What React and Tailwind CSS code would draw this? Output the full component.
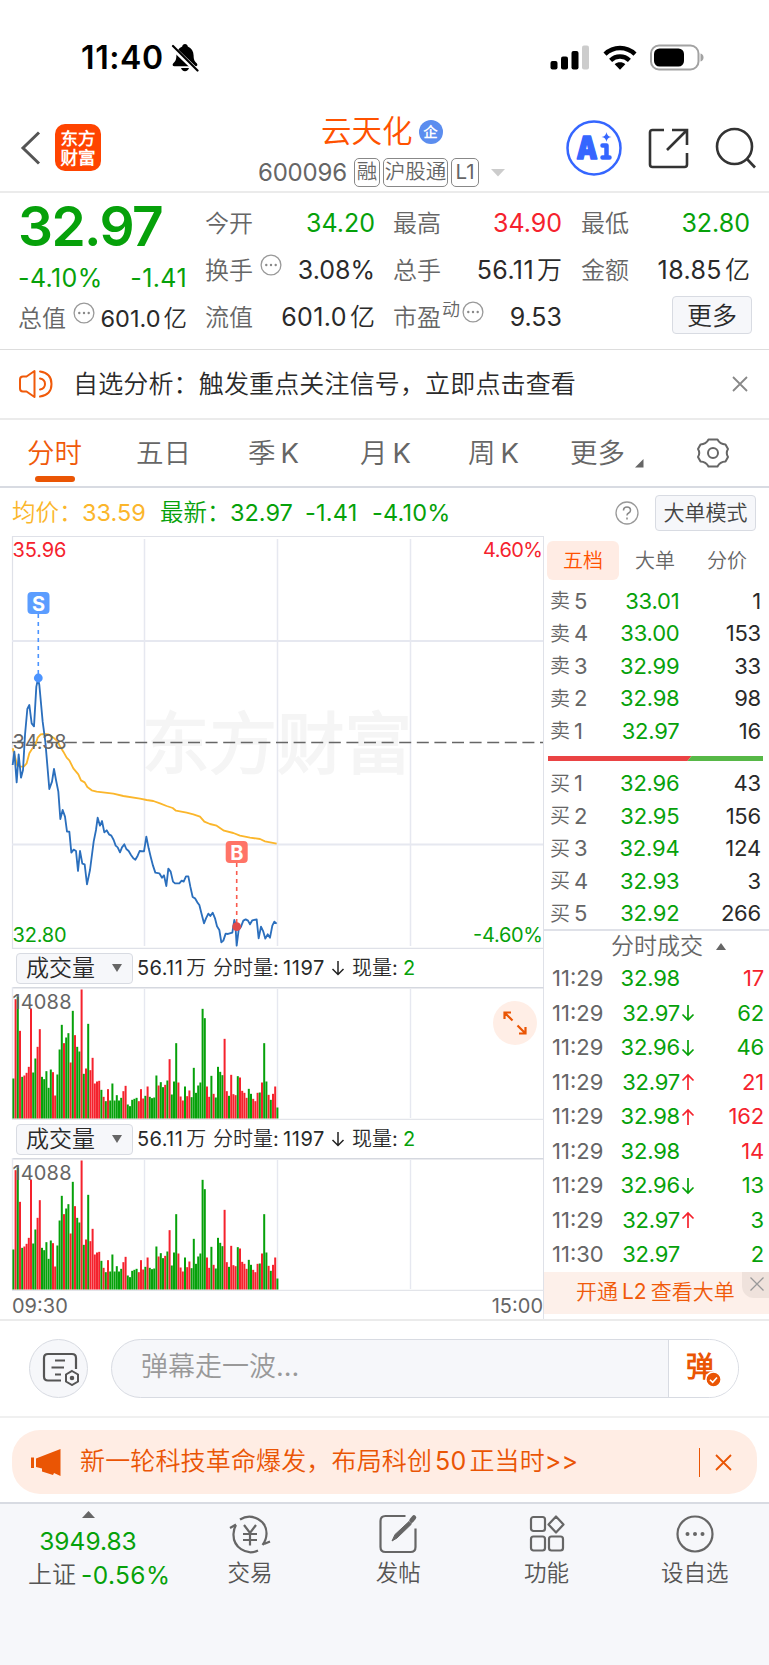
const GREEN = '#06a10a';
const RED = '#f5222d';

const sells = [
    ['卖', 5, '33.01', 1],
    ['卖', 4, '33.00', 153],
    ['卖', 3, '32.99', 33],
    ['卖', 2, '32.98', 98],
    ['卖', 1, '32.97', 16],
];

const buys = [
    ['买', 1, '32.96', 43],
    ['买', 2, '32.95', 156],
    ['买', 3, '32.94', 124],
    ['买', 4, '32.93', 3],
    ['买', 5, '32.92', 266],
];

const trades = [
    { time: '11:29', price: '32.98', dir: '', qty: 17, up: true },
    { time: '11:29', price: '32.97', dir: 'down', qty: 62, up: false },
    { time: '11:29', price: '32.96', dir: 'down', qty: 46, up: false },
    { time: '11:29', price: '32.97', dir: 'up', qty: 21, up: true },
    { time: '11:29', price: '32.98', dir: 'up', qty: 162, up: true },
    { time: '11:29', price: '32.98', dir: '', qty: 14, up: true },
    { time: '11:29', price: '32.96', dir: 'down', qty: 13, up: false },
    { time: '11:29', price: '32.97', dir: 'up', qty: 3, up: false },
    { time: '11:30', price: '32.97', dir: '', qty: 2, up: false },
];

// one value per minute, negative = falling minute (green)
const volumes = [
    -120, 358, -365, 263, -125, 129, 137, 155, 330, -138, -180, 215, 268, -125, -118, -142, -92, -147, 139, 69,
    -132, -207, -281, 226, -243, -256, 168, -323, 250, -215, -201, 387, -134, 150, -284, 145, 182, 105, 111, 113,
    -86, 65, -52, 88, -54, -105, -54, -70, -54, -62, 82, 98, -42, -37, -56, -59, -62, 52, 88, 60,
    -68, 96, -65, -61, -63, -129, 99, -109, -94, 101, -114, 178, -72, -111, -226, 108, 66, 54, -96, 67,
    84, -64, -152, -77, -99, -108, -329, -301, 96, 65, -128, 74, -63, -155, -140, -130, 239, 82, -68, 131,
    73, 70, -127, 123, 83, 77, 62, -89, -74, 59, 52, 77, -78, 108, -226, -111, 71, -56, 74, 96,
    -33,
];

const priceLine =
    '38,690 43,650 50,742 56,658 63,728 69,705 75,600 82,522 88,510 95,565 102,574 109,455 114,432 118,450 128,560 136,620 148,762 156,740 162,702 168,735 175,770 181,852 188,825 195,845 201,890 208,890 214,953 221,944 228,948 234,1008 240,948 247,986 254,988 261,1048 270,1005 281,920 288,885 293,848 300,872 306,858 313,892 320,886 327,898 334,902 341,915 347,932 353,937 360,952 366,937 373,928 379,942 386,948 393,960 400,970 406,974 413,962 419,948 432,949 439,905 446,940 452,965 459,992 466,1013 478,1015 486,1028 492,1021 499,1053 505,1001 512,1010 519,1040 525,1045 538,1045 545,1037 551,1040 558,1024 565,1024 571,1055 578,1086 585,1090 592,1102 598,1110 605,1138 612,1165 618,1150 625,1136 631,1143 638,1133 645,1150 651,1174 658,1185 664,1222 670,1217 677,1196 684,1197 697,1193 703,1155 706,1165 710,1232 716,1185 723,1175 730,1157 737,1153 744,1157 750,1168 757,1156 770,1153 776,1210 783,1175 790,1190 796,1211 803,1198 810,1208 817,1172 823,1160 830,1166';

const avgLine =
    '38,640 45,665 52,692 62,695 72,694 80,685 88,655 96,642 106,630 113,608 122,598 132,597 145,598 160,608 172,618 180,634 190,650 200,668 208,676 220,700 235,718 243,736 254,742 262,756 275,766 290,770 340,776 370,783 420,791 440,795 460,798 480,805 500,813 518,819 528,827 560,833 580,838 600,845 613,860 630,867 650,872 672,887 700,894 720,902 750,908 780,912 795,919 830,926';

const Dots = ({ className }) => (
    <svg width="22" height="22" viewBox="0 0 22 22" className={`shrink-0 ${className}`}>
        <circle cx="11" cy="11" r="9.9" fill="none" stroke="#999" strokeWidth="1.3" />
        <g fill="#888">
            <circle cx="6.3" cy="11" r="1.2" />
            <circle cx="11" cy="11" r="1.2" />
            <circle cx="15.7" cy="11" r="1.2" />
        </g>
    </svg>
);

const StatusBar = () => (
    <div className="flex h-[114px] items-center pl-[81px] pr-[64px] pt-[2px] text-black">
        <span className="text-[32px] font-semibold tracking-[0.6px]">11:40</span>
        <svg width="28" height="30" viewBox="0 0 28 30" className="ml-[7px]">
            <path d="M14 1c-1.600 0-2.600 1-2.800 2.500C7.500 5 5.500 8.200 5.400 12.500c-.1 4.200-.9 5.700-3.100 7.800-1.200 1.200-.8 3 1.200 3h21c2 0 2.400-1.800 1.200-3-2.200-2.100-3-3.600-3.100-7.800-.1-4.300-2.100-7.500-5.800-9C16.600 2 15.600 1 14 1zM10 25c.5 2 2 3.200 4 3.200s3.500-1.200 4-3.200z" />
            <path d="M1 4l25 24" stroke="#fff" strokeWidth="5" />
            <path d="M2 3l24.500 24.500" stroke="#000" strokeWidth="2.200" strokeLinecap="round" />
        </svg>
        <svg width="40" height="26" viewBox="0 0 40 26" className="ml-auto">
            <rect x="0.500" y="16" width="7" height="8.500" rx="2" />
            <rect x="11" y="11.500" width="7" height="13" rx="2" />
            <rect x="21.500" y="6" width="7" height="18.500" rx="2" />
            <rect x="32" y="0.500" width="7" height="24" rx="2" fill="#ccc" />
        </svg>
        <svg width="34" height="26" viewBox="0 0 34 26" className="ml-[13px]">
            <g fill="none" stroke="#000" strokeWidth="4.400">
                <path d="M2 9.200c8.500-8.200 21.500-8.200 30 0" />
                <path d="M7.600 15.300c5.400-5 13.400-5 18.800 0" />
            </g>
            <path d="M17 24.800l-5.300-5.600c3-2.600 7.600-2.600 10.600 0z" />
        </svg>
        <svg width="55" height="28" viewBox="0 0 55 28" className="ml-[13px]">
            <rect x="1" y="1.500" width="47.500" height="24" rx="8" fill="#fff" stroke="#a2a2a2" strokeWidth="2" />
            <rect x="4" y="4.500" width="30" height="18" rx="5.500" />
            <path d="M50.500 9.500c2 .6 3 2 3 4s-1 3.400-3 4z" fill="#a2a2a2" />
        </svg>
    </div>
);

const Tag = ({ children, className }) => (
    <span className={`flex h-[29px] shrink-0 items-center justify-center whitespace-nowrap rounded-[5px] border border-[#888] text-[20.5px] leading-none text-[#666] ${className}`}>
        {children}
    </span>
);

const Header = () => (
    <div className="flex h-[79px] border-b-2 border-[#ebebeb]">
        <svg width="21" height="34" viewBox="0 0 21 34" className="ml-5 mt-[17px]">
            <path d="M19 1.500L3 17l16 15.500" fill="none" stroke="#555" strokeWidth="3" />
        </svg>
        <div className="ml-[14px] mt-[10px] flex h-[47px] w-[46px] flex-col items-center justify-center rounded-[10px] bg-[#ff4400] text-[17.500px] font-bold leading-[19px] text-white">
            <span>东方</span>
            <span>财富</span>
        </div>
        <div className="ml-[157px] w-[250px]">
            <div className="flex h-[35px] items-center pl-[63px]">
                <span className="text-[30.5px] leading-none text-[#ff5200]">云天化</span>
                <span className="ml-[6px] flex size-6 items-center justify-center rounded-full bg-[#5b8def] text-[14px] font-bold leading-none text-white">企</span>
            </div>
            <div className="mt-[9px] flex items-center">
                <span className="w-[96px] shrink-0 text-[24px] leading-none tracking-[-0.200px] text-[#666]">600096</span>
                <Tag className="w-[26px]">融</Tag>
                <Tag className="ml-[3px] w-[65px]">沪股通</Tag>
                <Tag className="ml-[3px] w-[28px]">L1</Tag>
                <svg width="14" height="8" viewBox="0 0 14 8" className="ml-3"><path d="M0 0h14L7 7.500z" fill="#ccc" /></svg>
            </div>
        </div>
        <svg width="56" height="56" viewBox="0 0 56 56" className="ml-[58px] mt-[6px]">
            <circle cx="28" cy="28" r="26.500" fill="none" stroke="#3566ff" strokeWidth="2.500" />
            <text x="10.500" y="38.500" fontSize="31" fontWeight="900" fill="#3566ff" stroke="#3566ff" strokeWidth="1.500" strokeLinejoin="round" textLength="21" lengthAdjust="spacingAndGlyphs">A</text>
            <path d="M36.500 25.500h4v12M36.500 37.500h7" fill="none" stroke="#3566ff" strokeWidth="4.500" strokeLinecap="round" strokeLinejoin="round" />
            <path d="M40.500 12c.7 3.300 1.700 4.300 5 5-3.300.7-4.300 1.700-5 5-.7-3.300-1.700-4.300-5-5 3.300-.7 4.300-1.700 5-5z" fill="#3566ff" />
        </svg>
        <svg width="41" height="41" viewBox="0 0 41 41" className="ml-[26px] mt-[14px]" fill="none" stroke="#333" strokeWidth="2.600">
            <path d="M16 2H4.500Q2 2 2 4.500v32Q2 39 4.500 39h32q2.500 0 2.500-2.500V25" />
            <path d="M24 2h15v15M38.500 2.500L19 22" />
        </svg>
        <svg width="42" height="42" viewBox="0 0 42 42" className="ml-[26px] mt-[13px]" fill="none" stroke="#333" strokeWidth="2.600">
            <circle cx="19.500" cy="19.500" r="17.500" />
            <path d="M32 32l8 8.500" />
        </svg>
    </div>
);

const Cell = ({ label, value, unit, color = 'text-[#2a2a2a]', children }) => (
    <div className="flex h-[47px] items-center">
        <span className="text-[24px] text-[#666]">{label}</span>
        {children}
        <span className={`ml-auto whitespace-nowrap text-[25px] ${color} ${unit ? 'tracking-[0.4px]' : ''}`}>
            {value}
            {unit && <span className="ml-[3px] tracking-normal">{unit}</span>}
        </span>
    </div>
);

const Quote = () => (
    <div className="flex h-[157px] border-b border-[#ddd] pl-[18px] pt-[7px]">
        <div className="w-[169px]">
            <div className="h-[53px] text-[55px] font-semibold leading-[53px] tracking-[-1.6px] text-[#06a10a]">32.97</div>
            <div className="flex h-[48px] items-center justify-between pt-1 text-[25px] tracking-[0.4px] text-[#06a10a]">
                <span>-4.10%</span>
                <span>-1.41</span>
            </div>
            <div className="flex h-[36px] items-center">
                <span className="text-[24px] text-[#666]">总值</span>
                <Dots className="mb-3 ml-[7px]" />
                <span className="ml-auto whitespace-nowrap text-[23.500px] text-[#2a2a2a]">601.0<span className="ml-[3px]">亿</span></span>
            </div>
        </div>
        <div className="ml-[18px] w-[170px]">
            <Cell label="今开" value="34.20" color="text-[#06a10a]" />
            <Cell label="换手" value="3.08%"><Dots className="mb-3 ml-[7px]" /></Cell>
            <Cell label="流值" value="601.0" unit="亿" />
        </div>
        <div className="ml-[18px] w-[169px]">
            <Cell label="最高" value="34.90" color="text-[#f5222d]" />
            <Cell label="总手" value="56.11" unit="万" />
            <Cell label="市盈" value="9.53">
                <span className="mb-4 ml-[1px] text-[18px] text-[#666]">动</span>
                <Dots className="mb-3 ml-[2px]" />
            </Cell>
        </div>
        <div className="ml-[19px] w-[169px]">
            <Cell label="最低" value="32.80" color="text-[#06a10a]" />
            <Cell label="金额" value="18.85" unit="亿" />
            <div className="ml-auto mr-[-2px] mt-[2px] flex h-[38px] w-[80px] items-center justify-center rounded-[4px] border border-[#d8dbe2] bg-[#f6f7fa] pt-[3px] text-[25px] text-[#2a2a2a]">更多</div>
        </div>
    </div>
);

const Notice = () => (
    <div className="flex h-[70px] items-center border-b-2 border-[#ebebeb] pl-[18px]">
        <svg width="36" height="30" viewBox="0 0 36 30" fill="none" stroke="#f05a0a" strokeWidth="2" strokeLinecap="round" strokeLinejoin="round">
            <path d="M16.500 2v26L8.500 22.500H5Q2 22.500 2 19.500v-9Q2 7.500 5 7.500h3.500z" />
            <path d="M22 9.500q5 1 5 5.500t-5 5.500M22 2.500q11.500 1.500 11.500 12.500T22 27.500" />
        </svg>
        <span className="ml-[19px] pt-px text-[25px] tracking-[0.150px] text-[#2a2a2a]">自选分析：触发重点关注信号，立即点击查看</span>
        <svg width="16" height="16" viewBox="0 0 16 16" className="ml-auto mr-[21px]"><path d="M1 1l14 14M15 1L1 15" stroke="#888" strokeWidth="1.800" /></svg>
    </div>
);

const Tabs = () => (
    <div className="flex h-[68px] items-center border-b-2 border-[#d8dbe2] pt-[2px] text-[27.5px] text-[#666]">
        <div className="relative ml-[27px] w-[109px] font-medium text-[#f05a0a]">
            分时
            <i className="absolute -bottom-[7px] left-2 h-[6px] w-10 rounded-full bg-[#ea5504]" />
        </div>
        <span className="w-[112px]">五日</span>
        <span className="w-[112px]">季<span className="ml-[5px]">K</span></span>
        <span className="w-[108px]">月<span className="ml-[5px]">K</span></span>
        <span className="w-[102px]">周<span className="ml-[5px]">K</span></span>
        <span className="w-[65px]">更多</span>
        <svg width="9" height="9" viewBox="0 0 9 9" className="mt-[18px]"><path d="M8.500 0v8.500H0z" fill="#666" /></svg>
        <svg width="34" height="32" viewBox="0 0 34 32" className="mb-[2px] ml-[52px]" fill="none" stroke="#666" strokeWidth="2" strokeLinejoin="round">
            <path d="M12.500 2.500h9q2.500 4.800 8 5l2.500 4.500q-2.500 4 0 8l-2.500 4.500q-5.500.2-8 5h-9q-2.500-4.800-8-5L2 20q2.500-4 0-8l2.500-4.500q5.500-.2 8-5z" />
            <circle cx="17" cy="16" r="5" />
        </svg>
    </div>
);

const InfoRow = () => (
    <div className="flex h-[48px] items-center pl-[12px] pt-[2px] text-[23.5px] text-[#06a10a]">
        <span className="w-[70px] whitespace-nowrap text-[#fbb62b]">均价：</span>
        <span className="w-[78px] text-[#fbb62b]">33.59</span>
        <span className="w-[70px] whitespace-nowrap">最新：</span>
        <span className="w-[75px]">32.97</span>
        <span className="w-[67px] tracking-[0.2px]">-1.41</span>
        <span className="tracking-[0.2px]">-4.10%</span>
        <svg width="24" height="24" viewBox="0 0 24 24" className="ml-auto">
            <circle cx="12" cy="12" r="11" fill="none" stroke="#999" strokeWidth="1.300" />
            <path d="M8.500 9.500q0-3.500 3.500-3.500t3.500 3.300q0 1.700-1.800 2.700T12 14.500M12 16.500v2" fill="none" stroke="#888" strokeWidth="1.500" />
        </svg>
        <div className="ml-4 mr-[13px] flex h-[36px] w-[101px] items-center justify-center rounded-[4px] border border-[#d8dbe2] bg-[#f6f7fa] text-[21px] text-[#444]">大单模式</div>
    </div>
);

const PriceChart = () => (
    <svg width="544" height="413" viewBox="0 536 544 413" className="block">
        <text x="142" y="768" fontSize="67.500" fontWeight="900" fill="#f5f5f5">东方财富</text>
        <g stroke="#e6e8f0" strokeWidth="1.500">
            <path d="M12.500 536.500h531M12.500 536v413M12.500 948.300h531" fill="none" stroke="#dfe1e8" strokeWidth="1.200" />
            <path d="M144.500 539v407M277.500 539v407M410.500 539v407" />
            <path d="M12 641h531M12 844.500h531" strokeWidth="2" />
        </g>
        <path d="M12 742.500h531" stroke="#666" strokeWidth="1.400" strokeDasharray="12 5.600" />
        <g fontSize="20" fill={RED}>
            <text x="12.500" y="556.500" textLength="54">35.96</text>
            <text x="543" y="556.500" textAnchor="end" textLength="60">4.60%</text>
        </g>
        <g transform="translate(0 535) scale(.33333)" fill="none" strokeLinejoin="round">
            <polyline points={avgLine} stroke="#fbb62b" strokeWidth="5.500" />
            <polyline points={priceLine} stroke="#2b6fbd" strokeWidth="5.500" />
        </g>
        <text x="12.500" y="749" fontSize="20" fill="#666" textLength="54">34.38</text>
        <g fontSize="20" fill={GREEN}>
            <text x="12.500" y="942" textLength="54">32.80</text>
            <text x="543" y="942" textAnchor="end" textLength="70">-4.60%</text>
        </g>
        <path d="M38.300 614v62" stroke="#4c94ff" strokeWidth="1.600" strokeDasharray="4 4" />
        <circle cx="38.300" cy="678" r="4.400" fill="#4c94ff" />
        <rect x="27.500" y="592" width="22" height="22" rx="4" fill="#5b9dff" />
        <text x="38.500" y="610.500" fontSize="20" fontWeight="700" fill="#fff" textAnchor="middle">S</text>
        <path d="M236.700 863v60" stroke="#f95b4e" strokeWidth="1.600" strokeDasharray="4 4" />
        <circle cx="236.700" cy="926.700" r="4.400" fill="#e04a4a" />
        <rect x="225.700" y="841" width="22" height="22" rx="4" fill="#ff7467" />
        <text x="236.800" y="859.500" fontSize="20" fontWeight="700" fill="#fff" textAnchor="middle">B</text>
    </svg>
);

const VolumePane = () => (
    <div className="h-[171px]">
        <div className="flex h-[38px] items-center pl-4 text-[20px] text-[#2a2a2a]">
            <div className="flex h-[31px] w-[117px] items-center rounded-[4px] border border-[#d8dbe2] bg-[#f6f7fa] pl-[9px] text-[23px]">
                成交量
                <svg width="10" height="8" viewBox="0 0 10 8" className="ml-[17px]"><path d="M0 0h10L5 8z" fill="#666" /></svg>
            </div>
            <span className="ml-1 w-[76px] whitespace-nowrap tracking-[0.4px]">56.11<span className="ml-[3px]">万</span></span>
            <span className="w-[70px] whitespace-nowrap">分时量:</span>
            <span className="w-[48px] tracking-[0.6px]">1197</span>
            <svg width="14" height="16" viewBox="0 0 14 16" className="mr-[7px]"><path d="M7 1v13M1.500 9L7 14.500 12.500 9" fill="none" stroke="#222" strokeWidth="1.500" /></svg>
            <span className="w-[51px] whitespace-nowrap">现量:</span>
            <span className="text-[#06a10a]">2</span>
        </div>
        <svg width="544" height="133" viewBox="0 0 544 133" className="block">
            <path d="M12 .5h531.500" stroke="#d5d8df" strokeWidth="2" />
            <path d="M12.500 0v132M144.500 2v129M277.500 2v129M410.500 2v129" stroke="#e6e8f0" strokeWidth="1.400" />
            <path d="M12 132.500h531.500" stroke="#e3e5ea" strokeWidth="1.400" />
            {volumes.map((v, i) => (
                <rect key={i} x={12.400 + i * 2.2} y={131.500 - Math.abs(v) / 3} width="2" height={Math.abs(v) / 3} fill={v > 0 ? RED : GREEN} />
            ))}
            <text x="12.500" y="21.500" fontSize="20" fill="#666" textLength="59">14088</text>
        </svg>
    </div>
);

const BookRow = ({ row }) => (
    <div className="flex h-[32.500px] items-center text-[22px]">
        <span className="w-[24px] text-[20px] text-[#666]">{row[0]}</span>
        <span className="text-[#666]">{row[1]}</span>
        <span className="ml-auto w-[70px] text-right tracking-[-0.200px] text-[#06a10a]">{row[2]}</span>
        <span className="w-[81.5px] text-right tracking-[-0.200px] text-[#2a2a2a]">{row[3]}</span>
    </div>
);

const Arrow = ({ dir }) => (
    <svg width="14" height="18" viewBox="0 0 14 18" className="ml-[1px]" fill="none" strokeWidth="1.700">
        {dir === 'down' && <path d="M7 1v15M1.500 10.500L7 16l5.500-5.500" stroke={GREEN} />}
        {dir === 'up' && <path d="M7 17V2M1.500 7.500L7 2l5.500 5.500" stroke={RED} />}
    </svg>
);

const SidePanel = () => (
    <div className="h-[783px] w-[226px] border-l border-[#dfe1e8]">
        <div className="flex items-center pl-[3px] pt-[5px] text-[20px] text-[#666]">
            <span className="flex h-[39px] w-[72px] items-center justify-center rounded-[6px] bg-[#ffece4] font-medium text-[#ff5200]">五档</span>
            <span className="ml-4 w-[72px]">大单</span>
            <span>分价</span>
        </div>
        <div className="pl-[6px] pr-[8px] pt-[5px]">
            {sells.map((r) => <BookRow key={r[1]} row={r} />)}
        </div>
        <svg width="215" height="5" viewBox="0 0 215 5" className="ml-1 mt-[8px] block">
            <path d="M0 0h143.500l-4 5H0z" fill="#ea4344" />
            <path d="M143.500 0H215v5h-75.500z" fill="#57b847" />
        </svg>
        <div className="h-[170px] border-b-2 border-[#dfe1e8] pl-[6px] pr-[8px] pt-[7px]">
            {buys.map((r) => <BookRow key={r[1]} row={r} />)}
        </div>
        <div className="flex h-[31px] items-center pl-[67px] text-[23px] text-[#666]">
            分时成交
            <svg width="10" height="7" viewBox="0 0 10 7" className="ml-[13px]"><path d="M0 7h10L5 0z" fill="#666" /></svg>
        </div>
        <div className="pl-2 pr-[5px]">
            {trades.map((t, i) => (
                <div key={i} className="flex h-[34.500px] items-center text-[22px]">
                    <span className="text-[#666]">{t.time}</span>
                    <span className="ml-auto tracking-[-0.200px] text-[#06a10a]">{t.price}</span>
                    <Arrow dir={t.dir} />
                    <span className={`w-[69px] text-right tracking-[-0.200px] ${t.up ? 'text-[#f5222d]' : 'text-[#06a10a]'}`}>{t.qty}</span>
                </div>
            ))}
        </div>
        <div className="relative flex h-[42px] items-center bg-[#fdf0ea] pb-[2px] pl-[32px] text-[21px] text-[#f05a0a]">
            开通<span className="mx-1">L2</span>查看大单
            <span className="absolute right-0 top-0 flex h-[26px] w-[27px] items-center justify-center rounded-bl-[12px] bg-[#efe2dc]">
                <svg width="14" height="14" viewBox="0 0 14 14" className="ml-[2px] mb-[2px]"><path d="M.5.5l13 13M13.500.5l-13 13" stroke="#999" strokeWidth="1.300" /></svg>
            </span>
        </div>
    </div>
);

const CommentBar = () => (
    <div className="flex h-[97px] items-center border-b-2 border-[#f0f0f0] pl-[29px]">
        <div className="flex size-[59px] items-center justify-center rounded-full border border-[#d8dbe2] bg-[#f6f7fa]">
            <svg width="38" height="34" viewBox="0 0 38 34" className="ml-[2px]" fill="none" stroke="#555" strokeWidth="2.200">
                <path d="M20 28.500H7q-4 0-4-4V6q0-4 4-4h24q4 0 4 4v11" />
                <path d="M14 8.500h10M10.500 15.500H23M14 22.500h6" />
                <path d="M31 19l6 3.500v7L31 33l-6-3.500v-7z" strokeWidth="2" />
                <circle cx="31" cy="26" r="1.200" fill="#555" />
            </svg>
        </div>
        <div className="ml-[23px] flex h-[59px] w-[628px] items-center overflow-hidden rounded-full border border-[#d8dbe2] bg-[#f6f7fa]">
            <span className="pb-[3px] pl-[29px] text-[27px] text-[#999]">弹幕走一波...</span>
            <div className="relative ml-auto flex h-full w-[70px] items-center border-l border-[#d8dbe2] bg-white pl-[17px]">
                <span className="pb-1 text-[28px] font-black text-[#ea5504]">弹</span>
                <svg width="17" height="17" viewBox="0 0 17 17" className="absolute left-[36px] top-[31px]">
                    <circle cx="8.500" cy="8.500" r="7.600" fill="#ea5504" stroke="#fff" strokeWidth="1.500" />
                    <path d="M5 8.700l2.700 2.700L12 6.500" fill="none" stroke="#fff" strokeWidth="1.600" />
                </svg>
            </div>
        </div>
    </div>
);

const Promo = () => (
    <div className="mx-3 mt-[12px] flex h-[64px] items-center rounded-[28px] bg-[#ffede4] text-[#ea5504]">
        <svg width="30" height="27" viewBox="0 0 30 27" className="ml-[19px]" fill="#ea5504">
            <path d="M0 8.500h3v10.500H0zM5 9.500L29.500 0v27L23 24l-1 2-11-3.500v-3L5 18z" />
        </svg>
        <span className="ml-[19px] whitespace-nowrap text-[25px] tracking-[0.150px]">新一轮科技革命爆发，布局科创<span className="mx-[3px]">50</span>正当时&gt;&gt;</span>
        <i className="ml-auto h-[29px] w-[1.500px] bg-[#ea5504]" />
        <svg width="17" height="17" viewBox="0 0 17 17" className="ml-[15px] mr-[25px]"><path d="M1 1l15 15M16 1L1 16" stroke="#ea5504" strokeWidth="1.800" /></svg>
    </div>
);

const NavItem = ({ label, children }) => (
    <div className="flex w-[148.250px] flex-col items-center">
        <svg width="44" height="40" viewBox="0 0 44 40" fill="none" stroke="#666" strokeWidth="2.200">{children}</svg>
        <span className="mt-[2px] text-[22.500px] leading-[34px] text-[#555]">{label}</span>
    </div>
);

const BottomNav = () => (
    <div className="mt-[8px] flex h-[163px] border-t-2 border-[#d8dbe2] bg-[#f6f7fa] pt-[7px]">
        <div className="flex w-[176px] flex-col items-center">
            <svg width="13" height="7" viewBox="0 0 13 7"><path d="M0 7h13L6.500 0z" fill="#666" /></svg>
            <span className="mt-[7px] text-[24.500px] leading-[33px] text-[#06a10a]">3949.83</span>
            <div className="flex w-full gap-[5px] pl-[28px] text-[24px] leading-[34px]">
                <span className="text-[#555]">上证</span>
                <span className="text-[24.500px] tracking-[0.4px] text-[#06a10a]">-0.56%</span>
            </div>
        </div>
        <div className="flex pt-[3px]">
            <NavItem label="交易">
                <path d="M12 5.500C24-2 39 7 38.500 20q-.2 6-4 11M30 36.500C18 42 5 33 5.500 20q.1-5 2.500-9M2 14l6-3.500M42 27.500l-6 2.500" />
                <path d="M16 11l6 8 6-8M15 20h14M15 26h14M22 19v12.500" />
            </NavItem>
            <NavItem label="发帖">
                <path d="M29 2.500H9q-5 0-5 5v26q0 5 5 5h25q5 0 5-5V15" transform="translate(.5 -.5)" />
                <path d="M16 27l3-6.500L33 7.500l2.500 2.500L21 24z" fill="#666" strokeWidth="1" />
                <path d="M35.500 6.500l2.500-3" strokeWidth="4.500" strokeLinecap="round" />
            </NavItem>
            <NavItem label="功能">
                <rect x="6" y="3" width="14" height="14" rx="2.500" />
                <rect x="6" y="22.500" width="14" height="14" rx="2.500" />
                <rect x="24" y="22.500" width="14" height="14" rx="2.500" />
                <path d="M31 2.500l7.500 8L31 18.500l-7.500-8z" strokeLinejoin="round" />
            </NavItem>
            <NavItem label="设自选">
                <circle cx="22" cy="20" r="17.500" />
                <g fill="#666" stroke="none">
                    <circle cx="14.500" cy="20" r="2" />
                    <circle cx="22" cy="20" r="2" />
                    <circle cx="29.500" cy="20" r="2" />
                </g>
            </NavItem>
        </div>
    </div>
);

export default function App() {
    return (
        <div className="h-[1665px] w-[769px] overflow-hidden bg-white font-[family-name:Inter,'Noto_Sans_CJK_SC_DemiLight','Noto_Sans_CJK_SC',sans-serif]">
            <StatusBar />
            <Header />
            <Quote />
            <Notice />
            <Tabs />
            <InfoRow />
            <div className="flex border-b-2 border-[#ebebeb]">
                <div className="relative h-[783px] w-[543px]">
                    <PriceChart />
                    <VolumePane />
                    <VolumePane />
                    <div className="flex h-[29px] items-center justify-between pl-[12px] text-[20px] text-[#666]">
                        <span>09:30</span>
                        <span>15:00</span>
                    </div>
                    <div className="absolute right-[6px] top-[465px] flex size-11 items-center justify-center rounded-full bg-[#ffeee6]">
                        <svg width="24" height="24" viewBox="0 0 24 24" fill="none" stroke="#ea5504" strokeWidth="2.200">
                            <path d="M1.500 8V1.500H8M1.500 1.500l8 8M22.500 16v6.500H16M22.500 22.500l-8-8" />
                        </svg>
                    </div>
                </div>
                <SidePanel />
            </div>
            <CommentBar />
            <Promo />
            <BottomNav />
        </div>
    );
}
